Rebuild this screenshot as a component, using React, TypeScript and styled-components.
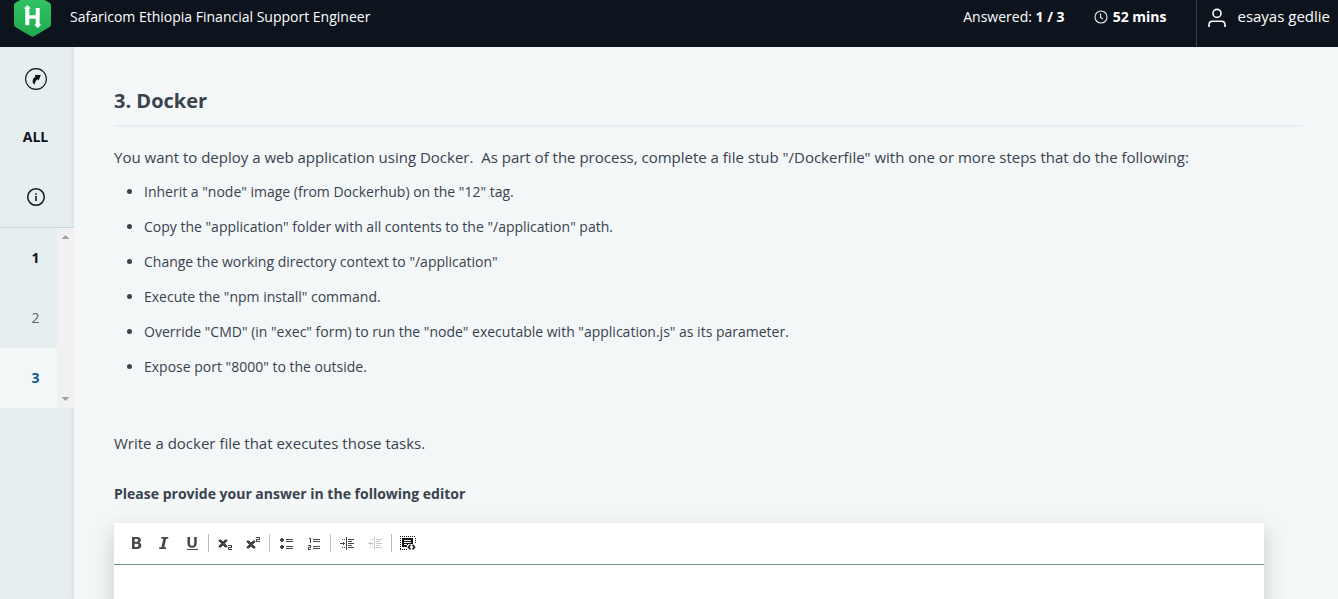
import React from "react";
import styled, { createGlobalStyle } from "styled-components";

const GlobalStyle = createGlobalStyle`
  *, *::before, *::after { box-sizing: border-box; }
  body {
    margin: 0;
    background: #f3f7f7;
    color: #39424e;
    font-family: "Open Sans", "Noto Sans", sans-serif;
    font-size: 14px;
    line-height: 20px;
  }
  button, textarea { font: inherit; color: inherit; }
`;

const Page = styled.div`
  display: flex;
  flex-direction: column;
  height: 100vh;
  overflow: hidden;
`;

const Header = styled.header`
  display: flex;
  flex: none;
  background: #0e141e;
  color: #fff;
`;

const Brand = styled.div`
  display: flex;
  flex: 1;
  align-items: flex-start;
  gap: 19px;
  padding-left: 14px;
`;

const HeaderText = styled.div`
  display: flex;
  align-items: center;
  gap: 5px;
  padding: 7px 0 20px;
`;

const Status = styled.div`
  display: flex;
  gap: 29px;
  padding-right: 30px;
`;

const UserButton = styled.button`
  display: flex;
  align-items: center;
  gap: 10px;
  padding: 5px 8px 20px 10px;
  border: 0;
  border-left: 1px solid #39424e;
  background: none;
  cursor: pointer;

  && {
    color: #fff;
    font-size: 15px;
  }
`;

const Body = styled.div`
  display: flex;
  flex: 1;
  min-height: 0;
`;

const Sidebar = styled.nav`
  flex: none;
  width: 74px;
  background: #e7eeef;
  box-shadow: inset -4px 0 4px -3px rgba(57, 66, 78, 0.08);
`;

const SidebarTop = styled.div`
  display: flex;
  flex-direction: column;
  border-bottom: 1px solid #c8d6da;
`;

const NavButton = styled.button<{ $tone?: "bold" | "muted" | "active" }>`
  display: flex;
  align-items: center;
  justify-content: center;
  height: 60px;
  width: 100%;
  padding: 0 3px 0 0;
  border: 0;
  cursor: pointer;
  background: ${(p) => (p.$tone === "active" ? "#f3f7f7" : "transparent")};

  && {
    font-weight: ${(p) => (p.$tone === "muted" ? 400 : 700)};
    color: ${(p) =>
      p.$tone === "muted" ? "#576871" : p.$tone === "active" ? "#0b5a8c" : "#0e141e"};
  }
`;

const QuestionPane = styled.div`
  display: flex;
`;

const QuestionList = styled.div`
  flex: 1;

  ${NavButton} { padding: 0 0 0 14px; }
`;

const ScrollTrack = styled.div`
  display: flex;
  flex-direction: column;
  justify-content: space-between;
  align-items: center;
  width: 17px;
  padding: 7px 0;
  background: #f1f1f1;
`;

const Content = styled.main`
  flex: 1;
  min-width: 0;
  padding: 40px 35px 0 40px;
  overflow: hidden;
`;

const Title = styled.h1`
  margin: 0 0 19px;
  padding-bottom: 11px;
  border-bottom: 2px solid #e7eeef;
  font-size: 20px;
  line-height: 27px;
  font-weight: 700;
`;

const Paragraph = styled.p`
  margin: 0;
  font-size: 15px;
  line-height: 22px;
`;

const TaskList = styled.ul`
  display: flex;
  flex-direction: column;
  gap: 15px;
  margin: 14px 0 55px;
  padding-left: 30px;
`;

const Prompt = styled.h2`
  margin: 30px 0 19px;
  font-size: 14px;
  line-height: 20px;
  font-weight: 700;
`;

const Editor = styled.section`
  margin-right: 39px;
  background: #fff;
  box-shadow: 0 8px 20px rgba(57, 66, 78, 0.24);
`;

const Toolbar = styled.div`
  display: flex;
  align-items: center;
  height: 42px;
  padding: 0 0 1px 8px;
  border-bottom: 1px solid #738f93;
`;

const ToolGroup = styled.div`
  display: flex;
  align-items: center;

  & + & {
    margin-left: 2px;
    padding-left: 2px;
    border-left: 1px solid #bcbcbc;
  }
`;

const ToolButton = styled.button`
  display: flex;
  align-items: center;
  justify-content: center;
  width: 28px;
  height: 18px;
  padding: 0;
  border: 0;
  background: none;
  cursor: pointer;

  &:disabled { opacity: 0.3; }
`;

const AnswerArea = styled.textarea`
  display: block;
  width: 100%;
  height: 200px;
  padding: 16px;
  border: 0;
  outline: 0;
  resize: none;
  background: #fff;
`;

const LogoMark = styled.svg`
  flex: none;
  display: block;
`;

const Logo = () => (
  <LogoMark width="37" height="37" viewBox="0 7 37 37" role="img" aria-label="HackerRank">
    <defs>
      <linearGradient id="logoGreen" x1="0" y1="0" x2="0" y2="1">
        <stop offset="0" stopColor="#32c766" />
        <stop offset="1" stopColor="#20a850" />
      </linearGradient>
    </defs>
    <path
      d="M16.500 1.600q2-1.100 4 0l14.300 7.600q2.200 1.100 2.200 3.200v19q0 2-2.200 3.200l-14.300 8.500q-2 1.200-4 0l-14.300-8.500q-2.200-1.200-2.200-3.200v-19q0-2.100 2.200-3.200z"
      fill="url(#logoGreen)"
    />
    <path
      d="M13.400 12l3.600 3.500h-1.700v6.700h6.400V15h4v16.500h1.700L23.700 35.300l-3.500-3.800h1.500v-5.800h-6.400v6.600h-4V15.500H9.900z"
      fill="#fff"
    />
  </LogoMark>
);

const ClockIcon = () => (
  <svg width="14" height="14" viewBox="0 0 14 14" fill="none" stroke="#e7eeef" strokeWidth="1.100">
    <circle cx="7" cy="7" r="6" />
    <path d="M6.500 3.500v4l2.500 1.500" />
  </svg>
);

const UserIcon = () => (
  <svg width="20" height="22" viewBox="0 -3 20 22" fill="none" stroke="#fff" strokeWidth="1.600">
    <circle cx="10" cy="5.400" r="4" />
    <path d="M2 19v-2.200q0-3.600 3.600-3.600h8.800q3.600 0 3.600 3.600v2.200" />
  </svg>
);

const CompassIcon = () => (
  <svg width="22" height="26" viewBox="0 -4 22 26">
    <circle cx="11" cy="11" r="10.400" fill="none" stroke="#0e141e" strokeWidth="1.100" />
    <path
      d="M9.700 7h6.100l-2.100 5.600-1-1.300c-2 1.300-2.700 2.900-3 5.300L8 15.200c-.8-2.600-.5-4.600 2.500-6.800z"
      fill="#0e141e"
    />
  </svg>
);

const InfoIcon = () => (
  <svg width="20" height="20" viewBox="0 0 20 20">
    <circle cx="10" cy="10" r="8.300" fill="none" stroke="#0e141e" strokeWidth="1.500" />
    <path d="M9.200 9h1.600v5H9.200zM9.200 6.200h1.600v1.600H9.200z" fill="#0e141e" />
  </svg>
);

const Arrow = ({ down }: { down?: boolean }) => (
  <svg width="7" height="4" viewBox="0 0 7 4" fill="#a3a3a3" shapeRendering="crispEdges">
    <path d={down ? "M0 0h7v1H6v1H5v1H4v1H3V3H2V2H1V1H0z" : "M0 4h7V3H6V2H5V1H4V0H3v1H2v1H1v1H0z"} />
  </svg>
);

const tool = { width: 16, height: 16, viewBox: "0 0 16 16", fill: "#474747", shapeRendering: "crispEdges" as const };

const BoldIcon = () => (
  <svg {...tool} shapeRendering="auto">
    <path fillRule="evenodd" d="M4 2h4.800c2.600 0 4 1 4 3 0 1.300-.6 2.100-1.600 2.600 1.300.4 2.100 1.400 2.100 2.900 0 2.200-1.600 3.500-4.300 3.500H4zM6.600 4v2.800h1.700c1.200 0 1.800-.5 1.800-1.400S9.500 4 8.400 4zm0 4.700V12h2c1.300 0 1.900-.6 1.900-1.700s-.7-1.600-2-1.600z" />
  </svg>
);

const ItalicIcon = () => (
  <svg {...tool} shapeRendering="auto">
    <path d="M5.500 2h7l-.4 1.800h-2L8.300 12.200h2L9.900 14H3l.4-1.800h2L7.300 3.800h-2.200z" />
  </svg>
);

const UnderlineIcon = () => (
  <svg {...tool} shapeRendering="auto">
    <path d="M3.500 2H6v6.300c0 1.700.6 2.500 2.100 2.500s2.100-.8 2.100-2.500V2h2.500v6.500c0 2.700-1.600 4.200-4.600 4.200s-4.600-1.500-4.600-4.200zM3 14h11v1H3z" />
  </svg>
);

const SubscriptIcon = () => (
  <svg {...tool}>
    <path d="M2 5h2l6 6v1H8L2 6zM10 5v1l-6 6H2v-1l6-6z" stroke="#474747" strokeWidth="1" shapeRendering="auto" />
    <path d="M11 10h4v3h-3v1h3v1h-4v-3h3v-1h-3z" />
  </svg>
);

const SuperscriptIcon = () => (
  <svg {...tool}>
    <path d="M2 6h2l6 6v1H8L2 7zM10 6v1l-6 6H2v-1l6-6z" stroke="#474747" strokeWidth="1" shapeRendering="auto" />
    <path d="M11 2h4v3h-3v1h3v1h-4V4h3V3h-3z" />
  </svg>
);

const BulletsIcon = () => (
  <svg {...tool}>
    <path d="M3 3h2v1h1v2H5v1H3V6H2V4h1zM3 10h2v1h1v2H5v1H3v-1H2v-2h1zM8 4h7v1H8zM8 6h7v1H8zM8 11h7v1H8zM8 13h7v1H8z" />
  </svg>
);

const NumbersIcon = () => (
  <svg {...tool}>
    <path d="M3 3h2v5H4V4H3zM2 10h3v3H3v1h2v1H2v-3h2v-1H2zM7 4h7v1H7zM7 6h7v1H7zM7 11h7v1H7zM7 13h7v1H7z" />
  </svg>
);

const IndentIcon = ({ outdent }: { outdent?: boolean }) => (
  <svg {...tool}>
    <path d="M7 2h1v13H7zM3 4h1v1H3zM5 4h1v1H5zM3 12h1v1H3zM5 12h1v1H5zM9 4h6v1H9zM9 6h4v1H9zM9 8h6v1H9zM9 10h4v1H9zM9 12h6v1H9z" />
    <path d={outdent ? "M1 8h5v1H1zM3 7h1v3H3z" : "M1 8h5v1H1zM4 7h1v3H4z"} />
  </svg>
);

const CodeIcon = () => (
  <svg {...tool} fill="#111">
    <path d="M0 1.500h16M0 14.500h7" stroke="#111" strokeDasharray="1 1" />
    <path d="M.5 3v12M15.500 3v6" stroke="#111" strokeDasharray="1 1" />
    <path
      fillRule="evenodd"
      d="M2 3h11v6H8v1H7v2H2zM4 5v1h7V5zM4 7v1h7V7zM4 9v1h3V9z"
    />
    <path
      d="M10.500 9.800L8.400 12.200l2.100 2.400M12.500 9.800l2.100 2.400-2.100 2.400"
      fill="none"
      stroke="#111"
      strokeWidth="1.500"
      shapeRendering="auto"
    />
  </svg>
);

const tasks = [
  'Inherit a "node" image (from Dockerhub) on the "12" tag.',
  'Copy the "application" folder with all contents to the "/application" path.',
  'Change the working directory context to "/application"',
  'Execute the "npm install" command.',
  'Override "CMD" (in "exec" form) to run the "node" executable with "application.js" as its parameter.',
  'Expose port "8000" to the outside.',
];

const toolGroups = [
  [
    { label: "Bold", icon: <BoldIcon /> },
    { label: "Italic", icon: <ItalicIcon /> },
    { label: "Underline", icon: <UnderlineIcon /> },
  ],
  [
    { label: "Subscript", icon: <SubscriptIcon /> },
    { label: "Superscript", icon: <SuperscriptIcon /> },
  ],
  [
    { label: "Bulleted list", icon: <BulletsIcon /> },
    { label: "Numbered list", icon: <NumbersIcon /> },
  ],
  [
    { label: "Increase indent", icon: <IndentIcon /> },
    { label: "Decrease indent", icon: <IndentIcon outdent />, disabled: true },
  ],
  [{ label: "Insert code snippet", icon: <CodeIcon /> }],
];

export default function App() {
  return (
    <Page>
      <GlobalStyle />
      <Header>
        <Brand>
          <Logo />
          <HeaderText>Safaricom Ethiopia Financial Support Engineer</HeaderText>
        </Brand>
        <Status>
          <HeaderText>
            <span>
              Answered: <b>1 / 3</b>
            </span>
          </HeaderText>
          <HeaderText>
            <ClockIcon />
            <b>52 mins</b>
          </HeaderText>
        </Status>
        <UserButton type="button">
          <UserIcon />
          esayas gedlie
        </UserButton>
      </Header>
      <Body>
        <Sidebar aria-label="Questions">
          <SidebarTop>
            <NavButton type="button" aria-label="Overview">
              <CompassIcon />
            </NavButton>
            <NavButton type="button">ALL</NavButton>
            <NavButton type="button" aria-label="Information">
              <InfoIcon />
            </NavButton>
          </SidebarTop>
          <QuestionPane>
            <QuestionList>
              <NavButton type="button" $tone="bold">1</NavButton>
              <NavButton type="button" $tone="muted">2</NavButton>
              <NavButton type="button" $tone="active" aria-current="page">3</NavButton>
            </QuestionList>
            <ScrollTrack aria-hidden="true">
              <Arrow />
              <Arrow down />
            </ScrollTrack>
          </QuestionPane>
        </Sidebar>
        <Content>
          <Title>3. Docker</Title>
          <Paragraph>
            You want to deploy a web application using Docker.&nbsp; As part of the process, complete a file
            stub "/Dockerfile" with one or more steps that do the following:
          </Paragraph>
          <TaskList>
            {tasks.map((task) => (
              <li key={task}>{task}</li>
            ))}
          </TaskList>
          <Paragraph>Write a docker file that executes those tasks.</Paragraph>
          <Prompt id="answer-label">Please provide your answer in the following editor</Prompt>
          <Editor>
            <Toolbar role="toolbar" aria-label="Formatting">
              {toolGroups.map((group) => (
                <ToolGroup key={group[0].label}>
                  {group.map((item) => (
                    <ToolButton
                      key={item.label}
                      type="button"
                      aria-label={item.label}
                      disabled={"disabled" in item}
                    >
                      {item.icon}
                    </ToolButton>
                  ))}
                </ToolGroup>
              ))}
            </Toolbar>
            <AnswerArea aria-labelledby="answer-label" />
          </Editor>
        </Content>
      </Body>
    </Page>
  );
}
